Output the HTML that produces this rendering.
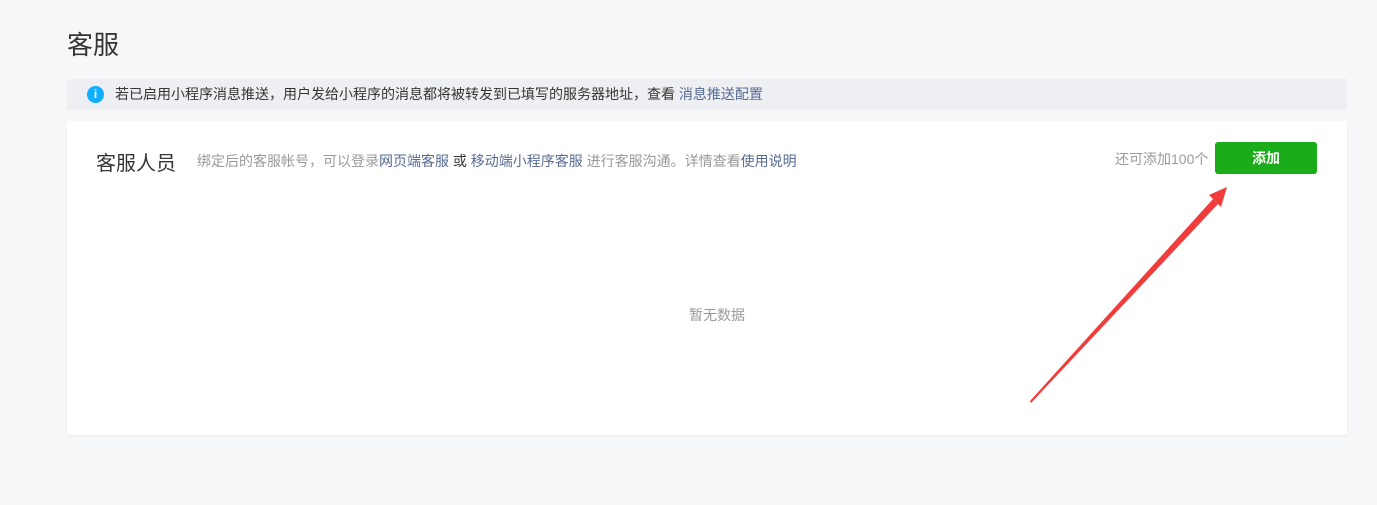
<!DOCTYPE html><html><head><meta charset="utf-8"><style>
body{margin:0;width:1377px;height:505px;background:#f6f7f9;font-family:"Liberation Sans","Noto Sans CJK SC",sans-serif;position:relative;overflow:hidden}
.t{position:absolute;left:67px;top:25px;font-size:26px;color:#353535}
.n{position:absolute;left:67px;top:79px;width:1280px;height:31px;background:#eeeff2;font-size:14px;color:#353535;line-height:31px}
.n .i{position:absolute;left:20px;top:7px;width:17px;height:17px;border-radius:50%;background:#10aeff;color:#fff;font-size:12px;text-align:center;line-height:17px;font-weight:bold}
.n span.tx{position:absolute;left:48px}
a{color:#576b95;text-decoration:none}
.c{position:absolute;left:67px;top:121px;width:1280px;height:314px;background:#fff;border-radius:3px;box-shadow:0 1px 2px rgba(0,0,0,.05)}
.h{position:absolute;left:29px;top:26px;font-size:20px;color:#353535}
.d{position:absolute;left:130px;top:30px;font-size:14px;color:#9a9a9a}
.r{position:absolute;left:1048px;top:28px;font-size:14px;color:#9a9a9a}
.b{position:absolute;left:1148px;top:21px;width:102px;height:32px;background:#1aad19;border-radius:3px;color:#fff;font-size:14px;text-align:center;line-height:32px;font-weight:bold}
.e{position:absolute;left:622px;top:184px;font-size:14px;color:#9a9a9a}
</style></head><body>
<div class="t">客服</div>
<div class="n"><div class="i">i</div><span class="tx">若已启用小程序消息推送，用户发给小程序的消息都将被转发到已填写的服务器地址，查看 <a>消息推送配置</a></span></div>
<div class="c">
<div class="h">客服人员</div>
<div class="d">绑定后的客服帐号，可以登录<a>网页端客服</a> <span style="color:#353535">或</span> <a>移动端小程序客服</a> 进行客服沟通。详情查看<a>使用说明</a></div>
<div class="r">还可添加100个</div>
<div class="b">添加</div>
<div class="e">暂无数据</div>
</div>
<svg style="position:absolute;left:0;top:0" width="1377" height="505"><polygon points="1031,403 1030,401 1213,199 1218,204" fill="#f13c3c"/><polygon points="1227,187 1209,195 1221,207" fill="#f13c3c"/></svg>
</body></html>
